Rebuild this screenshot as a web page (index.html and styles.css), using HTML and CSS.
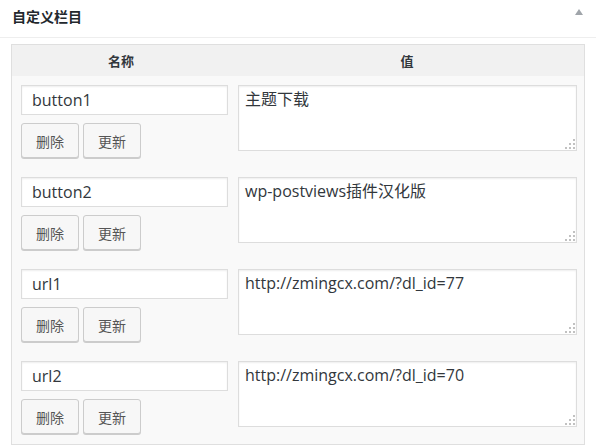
FILE: index.html
```html
<!DOCTYPE html>
<html lang="zh-CN">
<head>
<meta charset="utf-8">
<title>自定义栏目</title>
<link rel="stylesheet" href="styles.css">
</head>
<body>
<div class="postbox">
  <div class="postbox-header">
    <h2 class="postbox-title">自定义栏目</h2>
    <span class="toggle-arrow"></span>
  </div>
  <div class="inside">
    <div class="meta-table">
      <div class="meta-head">
        <div class="head-cell">名称</div>
        <div class="head-cell">值</div>
      </div>
      <div class="meta-row">
        <div class="name-cell">
          <input class="key-input" type="text" value="button1">
          <div class="btn-group"><button class="btn">删除</button><button class="btn">更新</button></div>
        </div>
        <div class="value-cell">
          <div class="ta-wrap"><textarea class="value-input">主题下载</textarea><svg class="grip" width="10" height="10" viewBox="0 0 10 10"><rect x="8" y="0" width="2" height="2"/><rect x="4" y="4" width="2" height="2"/><rect x="8" y="4" width="2" height="2"/><rect x="0" y="8" width="2" height="2"/><rect x="4" y="8" width="2" height="2"/><rect x="8" y="8" width="2" height="2"/></svg></div>
        </div>
      </div>
      <div class="meta-row">
        <div class="name-cell">
          <input class="key-input" type="text" value="button2">
          <div class="btn-group"><button class="btn">删除</button><button class="btn">更新</button></div>
        </div>
        <div class="value-cell">
          <div class="ta-wrap"><textarea class="value-input">wp-postviews插件汉化版</textarea><svg class="grip" width="10" height="10" viewBox="0 0 10 10"><rect x="8" y="0" width="2" height="2"/><rect x="4" y="4" width="2" height="2"/><rect x="8" y="4" width="2" height="2"/><rect x="0" y="8" width="2" height="2"/><rect x="4" y="8" width="2" height="2"/><rect x="8" y="8" width="2" height="2"/></svg></div>
        </div>
      </div>
      <div class="meta-row">
        <div class="name-cell">
          <input class="key-input" type="text" value="url1">
          <div class="btn-group"><button class="btn">删除</button><button class="btn">更新</button></div>
        </div>
        <div class="value-cell">
          <div class="ta-wrap"><textarea class="value-input">http://zmingcx.com/?dl_id=77</textarea><svg class="grip" width="10" height="10" viewBox="0 0 10 10"><rect x="8" y="0" width="2" height="2"/><rect x="4" y="4" width="2" height="2"/><rect x="8" y="4" width="2" height="2"/><rect x="0" y="8" width="2" height="2"/><rect x="4" y="8" width="2" height="2"/><rect x="8" y="8" width="2" height="2"/></svg></div>
        </div>
      </div>
      <div class="meta-row">
        <div class="name-cell">
          <input class="key-input" type="text" value="url2">
          <div class="btn-group"><button class="btn">删除</button><button class="btn">更新</button></div>
        </div>
        <div class="value-cell">
          <div class="ta-wrap"><textarea class="value-input">http://zmingcx.com/?dl_id=70</textarea><svg class="grip" width="10" height="10" viewBox="0 0 10 10"><rect x="8" y="0" width="2" height="2"/><rect x="4" y="4" width="2" height="2"/><rect x="8" y="4" width="2" height="2"/><rect x="0" y="8" width="2" height="2"/><rect x="4" y="8" width="2" height="2"/><rect x="8" y="8" width="2" height="2"/></svg></div>
        </div>
      </div>
    </div>
  </div>
</div>
</body>
</html>
```
FILE: styles.css
```css
html, body {
  margin: 0;
  padding: 0;
  background: #fff;
}
body {
  font-family: "Open Sans", "Noto Sans CJK SC", sans-serif;
  color: #32373c;
  width: 596px;
  height: 445px;
  overflow: hidden;
}
.postbox {
  background: #fff;
}
.postbox-header {
  height: 37px;
  border-bottom: 1px solid #eeeeee;
  display: flex;
  align-items: center;
  justify-content: space-between;
  padding: 0 12px;
  box-sizing: border-box;
  height: 38px;
}
.postbox-title {
  margin: 0;
  font-size: 14px;
  font-weight: bold;
  color: #23282d;
  font-family: "Noto Sans CJK SC", sans-serif;
  line-height: 1;
  position: relative;
  top: -3px;
}
.toggle-arrow {
  width: 0;
  height: 0;
  border-left: 4px solid transparent;
  border-right: 4px solid transparent;
  border-bottom: 6px solid #a0a5aa;
  position: relative;
  top: -7px;
  left: -1px;
}
.inside {
  padding: 6px 11px 0 11px;
}
.meta-table {
  border: 1px solid #dfdfdf;
  width: 574px;
  box-sizing: border-box;
  background: #f9f9f9;
}
.meta-head {
  display: grid;
  grid-template-columns: 218px 1fr;
  background: #f1f1f1;
  height: 31px;
  align-items: center;
}
.head-cell {
  text-align: center;
  font-size: 13px;
  font-weight: bold;
  color: #32373c;
  font-family: "Noto Sans CJK SC", sans-serif;
}
.meta-row {
  display: grid;
  grid-template-columns: 218px 1fr;
  padding: 9px 0 9px 0;
  height: 92px;
  box-sizing: border-box;
}
.name-cell {
  padding-left: 9px;
  display: flex;
  flex-direction: column;
  gap: 8px;
}
.key-input {
  width: 207px;
  height: 30px;
  box-sizing: border-box;
  border: 1px solid #dddddd;
  box-shadow: inset 0 1px 2px rgba(0,0,0,0.07);
  background: #fff;
  padding: 0 10px;
  margin: 0;
  font-family: "Open Sans", "Noto Sans CJK SC", sans-serif;
  font-size: 16px;
  color: #32373c;
  outline: none;
}
.btn-group {
  display: flex;
  gap: 4px;
}
.btn {
  width: 58px;
  height: 35px;
  box-sizing: border-box;
  border: 1px solid #cccccc;
  border-radius: 3px;
  background: #f7f7f7;
  box-shadow: 0 1px 0 #cccccc;
  color: #555;
  font-family: "Noto Sans CJK SC", sans-serif;
  font-size: 14px;
  padding: 0;
  margin: 0;
}
.value-cell {
  padding-left: 8px;
  padding-right: 6px;
}
.ta-wrap {
  position: relative;
  width: 339px;
  height: 66px;
}
.value-input {
  display: block;
  width: 339px;
  height: 66px;
  box-sizing: border-box;
  border: 1px solid #dddddd;
  box-shadow: inset 0 1px 2px rgba(0,0,0,0.07);
  background: #fff;
  margin: 0;
  padding: 3px 6px;
  resize: none;
  font-family: "Open Sans", "Noto Sans CJK SC", sans-serif;
  font-size: 16px;
  line-height: 20px;
  color: #32373c;
  outline: none;
  overflow: hidden;
}
.grip {
  position: absolute;
  right: 2px;
  bottom: 2px;
  fill: #c1c1c1;
}
```
